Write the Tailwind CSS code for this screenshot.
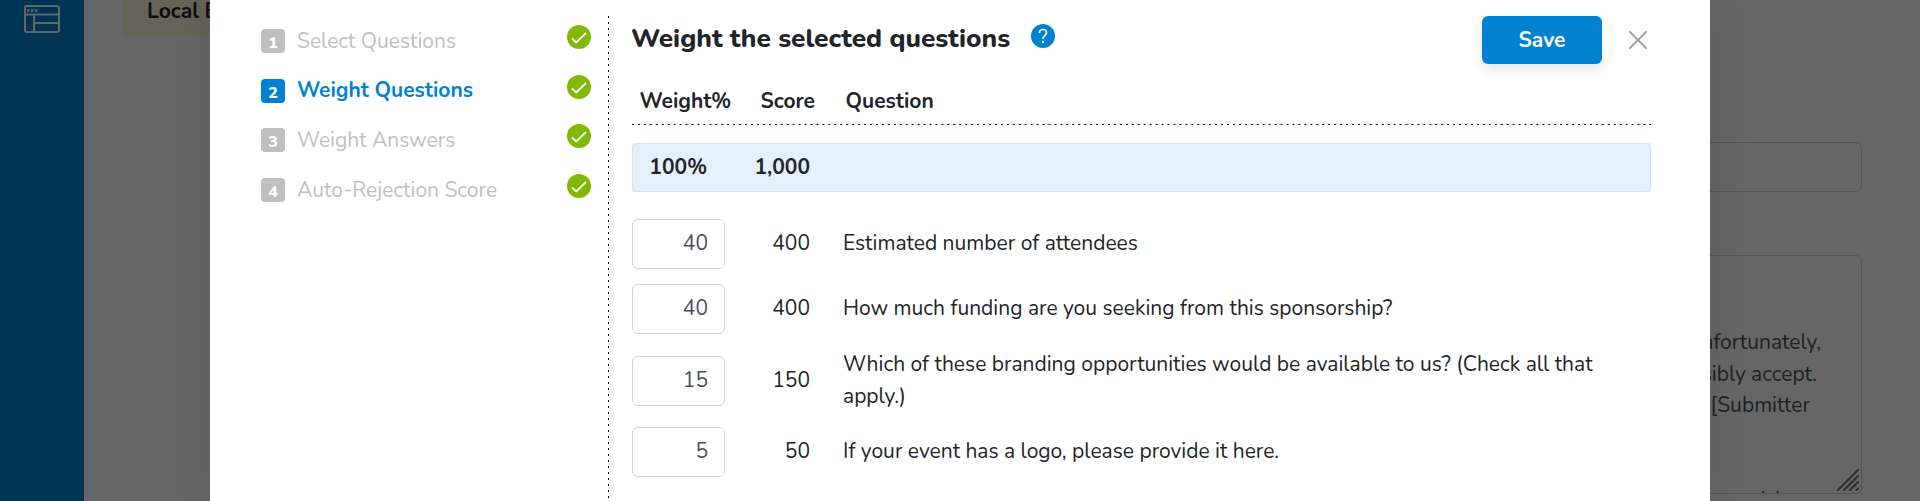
<!DOCTYPE html>
<html lang="en">
<head>
    <meta charset="UTF-8">
    <meta name="viewport" content="width=device-width, initial-scale=1.0">
    <title>Weight Questions</title>
    <script src="https://cdn.jsdelivr.net/npm/@tailwindcss/browser@4"></script>
</head>
<body class="relative h-[501px] overflow-hidden bg-white font-['Nunito','Nunito_Sans',sans-serif] text-[21px] leading-[31.5px] text-[#212529]">

    <!-- Page behind the modal -->
    <div class="flex h-[501px] overflow-hidden">
        <aside class="w-[84px] shrink-0 bg-[#0082d1] pt-[5px] pl-6">
            <svg class="h-7 w-9" viewBox="0 0 36 28" fill="none" stroke="#fff" stroke-width="2">
                <rect x="1" y="1" width="34" height="26" rx="2" />
                <path d="M1 9.5H35M10 10V27M10 18H35" />
                <path d="M3 5.5H14" stroke-width="2.5" stroke-dasharray="2.5 1.5" />
            </svg>
        </aside>
        <main class="flex-1 pl-[39px] pr-[58px]">
            <div class="flex h-9 w-[400px] items-end bg-[#fff8dc] pb-[9px] pl-6 font-bold">Local Event Sponsorship</div>
            <div class="mt-[106px] ml-[400px] h-[50px] rounded-md border border-[#ced4da]"></div>
            <div class="relative mt-[63px] ml-[400px] flex h-[239px] flex-col items-end overflow-hidden rounded-md border border-[#ced4da] pt-[71px] text-[#495057]">
                <p class="pr-10">Unfortunately,</p>
                <p class="pr-11">possibly accept.</p>
                <p class="pr-[51px]">[Submitter</p>
                <p class="mt-[63px] pr-[74px]">rich</p>
                <svg class="absolute right-0.5 bottom-0.5 size-[22px]" viewBox="0 0 22 22" stroke="#707070" stroke-width="2" stroke-linecap="round">
                    <path d="M1 21L21 1M7 21L21 7M13 21L21 13M19.500 21L21 19.500" />
                </svg>
            </div>
        </main>
    </div>

    <!-- Overlay + modal -->
    <div class="absolute inset-0 flex justify-center bg-black/60">
        <div class="flex w-[1500px] bg-white pl-[51px] pr-[59px] shadow-[0_0_40px_rgba(0,0,0,0.1)]">

            <!-- Steps -->
            <nav class="w-[330px] pt-[25px] text-[#bfbfbf]">
                <div class="flex h-[49.7px]">
                    <span class="mt-1 flex size-6 items-center justify-center rounded bg-[#bfbfbf] pt-1 text-base font-extrabold text-white">1</span>
                    <span class="ml-3 flex-1 pt-[0.5px]">Select Questions</span>
                    <svg class="size-6" viewBox="0 0 24 24"><circle cx="12" cy="12" r="12" fill="#80ba00" /><path d="M5 13.5L9.2 17.5L19 8" fill="none" stroke="#fff" stroke-width="1.8" /></svg>
                </div>
                <div class="flex h-[49.7px]">
                    <span class="mt-1 flex size-6 items-center justify-center rounded bg-[#0082d1] pt-1 text-base font-extrabold text-white">2</span>
                    <span class="ml-3 flex-1 pt-[0.6px] font-bold text-[#0082d1]">Weight Questions</span>
                    <svg class="size-6" viewBox="0 0 24 24"><circle cx="12" cy="12" r="12" fill="#80ba00" /><path d="M5 13.5L9.2 17.5L19 8" fill="none" stroke="#fff" stroke-width="1.8" /></svg>
                </div>
                <div class="flex h-[49.7px]">
                    <span class="mt-1 flex size-6 items-center justify-center rounded bg-[#bfbfbf] pt-1 text-base font-extrabold text-white">3</span>
                    <span class="ml-3 flex-1 pt-[0.5px]">Weight Answers</span>
                    <svg class="size-6" viewBox="0 0 24 24"><circle cx="12" cy="12" r="12" fill="#80ba00" /><path d="M5 13.5L9.2 17.5L19 8" fill="none" stroke="#fff" stroke-width="1.8" /></svg>
                </div>
                <div class="flex h-[49.7px]">
                    <span class="mt-1 flex size-6 items-center justify-center rounded bg-[#bfbfbf] pt-1 text-base font-extrabold text-white">4</span>
                    <span class="ml-3 flex-1 pt-[0.5px]">Auto-Rejection Score</span>
                    <svg class="size-6" viewBox="0 0 24 24"><circle cx="12" cy="12" r="12" fill="#80ba00" /><path d="M5 13.5L9.2 17.5L19 8" fill="none" stroke="#fff" stroke-width="1.8" /></svg>
                </div>
            </nav>

            <!-- Dotted divider -->
            <svg class="mt-4 ml-[17px] h-[485px] w-px shrink-0"><line x1="0.5" y1="0" x2="0.5" y2="485" stroke="#000" stroke-width="1.2" stroke-dasharray="2 4" /></svg>

            <section class="ml-[23px] flex-1">
                <div class="flex h-[85px] pt-4">
                    <h1 class="-ml-px pt-[7px] text-[26.25px] font-extrabold">Weight the selected questions</h1>
                    <svg class="mt-2 ml-[21px] size-6" viewBox="0 0 24 24" fill="none"><circle cx="12" cy="12" r="12" fill="#0082d1" /><path d="M8.500 9C8.500 6.800 10 5.500 12 5.500S15.500 6.800 15.500 8.800C15.500 11.300 12 11.500 12 15" stroke="#fff" stroke-width="1.7" /><circle cx="12" cy="18" r="1.2" fill="#fff" /></svg>
                    <button class="ml-auto h-12 w-[120px] rounded-md bg-[#0082d1] pt-px font-bold text-white shadow-[0_6px_12px_rgba(0,0,0,0.1)]">Save</button>
                    <svg class="mt-[15px] mr-1 ml-[27px] size-[18px]" viewBox="0 0 18 18" stroke="#999" stroke-width="1.8"><path d="M0 0L18 18M18 0L0 18" /></svg>
                </div>

                <div class="grid h-[39px] grid-cols-[121px_85px_1fr] pt-[0.5px] pl-[7.5px] font-bold">
                    <span>Weight%</span>
                    <span>Score</span>
                    <span>Question</span>
                </div>
                <svg class="block h-px w-full"><line x1="0" y1="0.5" x2="1019" y2="0.5" stroke="#000" stroke-width="1.2" stroke-dasharray="2 3.95" /></svg>

                <div class="mt-[18px] bg-[#e4f1fa]">
                    <div class="grid h-[49px] grid-cols-[74px_103px_1fr] rounded-md border border-[#cde5f6] pt-[7.5px] text-right font-bold">
                        <span>100%</span>
                        <span>1,000</span>
                    </div>
                </div>

                <!-- Questions -->
                <div class="mt-[19.5px]">
                    <div class="grid grid-cols-[93px_85px_1fr] items-center py-[7.5px]">
                        <div class="h-[50px] rounded-md border border-[#ced4da] pt-2 pr-4 text-right text-[#495057]">40</div>
                        <span class="text-right">400</span>
                        <span class="pl-[33px]">Estimated number of attendees</span>
                    </div>
                    <div class="grid grid-cols-[93px_85px_1fr] items-center py-[7.5px]">
                        <div class="h-[50px] rounded-md border border-[#ced4da] pt-2 pr-4 text-right text-[#495057]">40</div>
                        <span class="text-right">400</span>
                        <span class="pl-[33px]">How much funding are you seeking from this sponsorship?</span>
                    </div>
                    <div class="grid grid-cols-[93px_85px_1fr] items-center py-[7.5px]">
                        <div class="h-[50px] rounded-md border border-[#ced4da] pt-2 pr-4 text-right text-[#495057]">15</div>
                        <span class="text-right">150</span>
                        <span class="pl-[33px]">Which of these branding opportunities would be available to us? (Check all that apply.)</span>
                    </div>
                    <div class="grid grid-cols-[93px_85px_1fr] items-center py-[7.5px]">
                        <div class="h-[50px] rounded-md border border-[#ced4da] pt-2 pr-4 text-right text-[#495057]">5</div>
                        <span class="text-right">50</span>
                        <span class="pl-[33px]">If your event has a logo, please provide it here.</span>
                    </div>
                </div>
            </section>
        </div>
    </div>
</body>
</html>
